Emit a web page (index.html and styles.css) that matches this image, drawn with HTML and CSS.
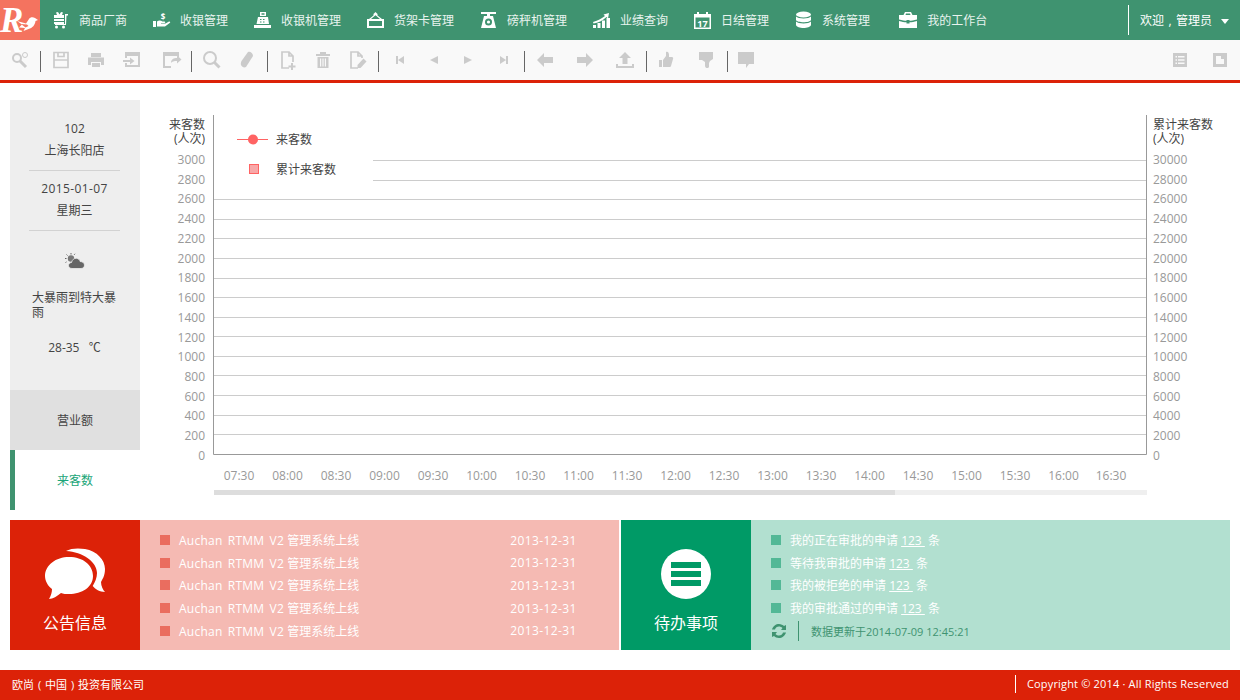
FILE: index.html
```html
<!DOCTYPE html>
<html lang="zh-CN">
<head>
<meta charset="utf-8">
<title>来客数</title>
<link rel="stylesheet" href="styles.css">
</head>
<body>
<header class="topbar">
  <a class="logo">
    <svg viewBox="0 0 40 40" width="40" height="40">
      <text class="logo-r" x="0" y="32">R</text>
      <path class="logo-w" d="M17 21l9 2.500 3-4.500c1-2 4-2.500 6-1l3 2-2.500 1c-.5 4-3 7-7 8l-5 2 1.500-3-6-.5 3-3z"/>
      <path class="logo-b" d="M21 24l6 .6 1.500 1.500-3 1.400z"/>
    </svg>
  </a>
  <nav class="nav">
    <a class="nav-item"><svg class="nav-icon" viewBox="0 0 17 18"><path d="M2 4h3L4 1.500 6 1l1.500 2.500L9 1l2 .5L10 4h2v3H2zM2 8h10v2H2zM2 11h10v2H2zM13 3h3v1.500h-1.500L14 14H3v-1h10z"/><circle cx="4.500" cy="16" r="1.500"/><circle cx="11.500" cy="16" r="1.500"/></svg><span>商品厂商</span></a>
    <a class="nav-item"><svg class="nav-icon" viewBox="0 0 17 18"><text class="dollar" x="10" y="8.500">$</text><path d="M0 10h3v6H0zM4 10.500c2-1.500 4-1 5.500 0h2c1 0 1 1.500 0 1.500H8v.6h4.500l3.500-2c1-.5 1.500.7 1 1.200l-5 3.700H4z"/></svg><span>收银管理</span></a>
    <a class="nav-item"><svg class="nav-icon" viewBox="0 0 17 18"><path d="M6 1h6v4H6zM4 6h10l1 7H2.500zM0 14h17v3H0z"/><path class="nav-cut" d="M7.500 2.200h3v1.600h-3zM6 8h1.500v1H6zM9 8h1.500v1H9zM6 10.500h1.500v1H6zM9 10.500h1.500v1H9z"/></svg><span>收银机管理</span></a>
    <a class="nav-item"><svg class="nav-icon" viewBox="0 0 17 18"><path d="M8.500 1l2 2v1.500L15 8h-2L8.500 4.300 4 8H2l4.500-3.500V3zM0 8h17v9H0z"/><path class="nav-cut" d="M2 10h13v5H2z"/></svg><span>货架卡管理</span></a>
    <a class="nav-item"><svg class="nav-icon" viewBox="0 0 17 18"><path d="M1 1h15v2H1zM7 3h3v2h3l3 12H1L4 5h3z"/><circle class="nav-cut" cx="8.500" cy="11" r="3.500"/><circle cx="8.500" cy="11" r="1.600"/></svg><span>磅秤机管理</span></a>
    <a class="nav-item"><svg class="nav-icon" viewBox="0 0 17 18"><path d="M0 14h3v3H0zM4.500 12h3v5h-3zM9 9.500h3V17H9zM13.500 7H17v10h-3.500z"/><path d="M0 11c4-1 8-3 12-6l-1.500-1.500L16 2l-1 5.500-1.500-1.500C9.500 9.500 5 12 .5 12.500z"/></svg><span>业绩查询</span></a>
    <a class="nav-item"><svg class="nav-icon" viewBox="0 0 17 18"><path d="M0 3h3V1h2v2h7V1h2v2h3v15H0zM1.500 6.500v10h14v-10z"/><text class="cal" x="8.500" y="15.500">17</text></svg><span>日结管理</span></a>
    <a class="nav-item"><svg class="nav-icon" viewBox="0 0 17 18"><ellipse cx="8.500" cy="3.500" rx="7.500" ry="3"/><path d="M1 5.500c2 2.500 13 2.500 15 0V9c-1 3-14 3-15 0zM1 10.500c2 2.500 13 2.500 15 0V14c-1 4-14 4-15 0z"/></svg><span>系统管理</span></a>
    <a class="nav-item nav-last"><svg class="nav-icon" viewBox="0 0 18 18"><path d="M6 1h6l1.500 3H18v4.500c-3 1-6 1.300-7.500 1.300V9h-3v.8C6 9.800 3 9.500 0 8.500V4h4.500zM6.500 4h5L11 2.500H7zM0 10c3 1 5 1.300 7.500 1.300v1.200h3v-1.200c2.500 0 4.500-.3 7.500-1.300v7H0z"/></svg><span>我的工作台</span></a>
  </nav>
  <div class="user"><span>欢迎<em class="punct">,</em>管理员</span><i class="caret"></i></div>
</header>

<div class="toolbar">
  <div class="tools">
    <svg class="tool" viewBox="0 0 20 20"><circle class="t-line" cx="7" cy="8" r="4"/><path class="t-line t-thick" d="M10 11l6 6"/><circle class="t-thin" cx="15" cy="5" r="2.500"/></svg>
  </div>
  <i class="sep"></i>
  <div class="tools tools-p9">
    <svg class="tool" viewBox="0 0 20 20"><path class="t-line t-thin2" d="M3 2.500h14v15H3zM3 10h14M7 2.500v4h6v-4"/></svg>
    <svg class="tool" viewBox="0 0 20 20"><path d="M5 3h10v4H5zM2 7.500h16V15h-3v-3H5v3H2zM6 13h8v4H6z"/></svg>
    <svg class="tool tool-m1" viewBox="0 0 20 20"><path d="M3 2h15v15H3v-4h2v2h11V6H5v2H3zM1 10h7V7.500l4.500 3.500L8 14.500V12H1z"/></svg>
    <svg class="tool tool-m5" viewBox="0 0 20 20"><path d="M1 2h16v5h-1V6H3v10h6v2H1zM9 13c0-4 3-5 6-5V5.500l4.500 4-4.500 4V11c-3 0-5 .6-6 2z"/></svg>
  </div>
  <i class="sep"></i>
  <div class="tools">
    <svg class="tool" viewBox="0 0 20 20"><circle class="t-line" cx="8" cy="8" r="6"/><path class="t-line t-thick" d="M12.500 12.500l5 5"/></svg>
    <svg class="tool" viewBox="0 0 20 20"><path d="M11 2c2-1 5 1 5 4L9 17c-2 1-4 0-5-2-.5-1 0-3 .5-4z"/></svg>
  </div>
  <i class="sep"></i>
  <div class="tools">
    <svg class="tool" viewBox="0 0 20 20"><path class="t-line t-thin2" d="M11 18H4V2h7l4 4v6M11 2v4h4"/><path d="M13 13h2v2.500h2.500v2H15V20h-2v-2.500h-2.500v-2H13z"/></svg>
    <svg class="tool" viewBox="0 0 20 20"><path d="M7 2h6v2h4v2H3V4h4zM4.500 7h11v11h-11zM7 8.500v8h1.200v-8zM9.400 8.500v8h1.200v-8zM11.800 8.500v8H13v-8z"/></svg>
    <svg class="tool" viewBox="0 0 20 20"><path class="t-line t-thin2" d="M10 18H3V2h7l4 4v2M10 2v4h4"/><path d="M15.500 8.500l3 3-6 6.500h-3v-3z"/></svg>
  </div>
  <i class="sep"></i>
  <div class="tools tools-nav">
    <svg class="tool" viewBox="0 0 20 20"><path d="M6 6h2v8H6zM14 6v8l-6-4z"/></svg>
    <svg class="tool" viewBox="0 0 20 20"><path d="M14 6v8L6 10z"/></svg>
    <svg class="tool" viewBox="0 0 20 20"><path d="M6 6v8l8-4z"/></svg>
    <svg class="tool tool-m2" viewBox="0 0 20 20"><path d="M12 6h2v8h-2zM6 6v8l6-4z"/></svg>
  </div>
  <i class="sep"></i>
  <div class="tools tools-wide">
    <svg class="tool" viewBox="0 0 20 20"><path d="M2 10l7-7v4h9v6H9v4z"/></svg>
    <svg class="tool" viewBox="0 0 20 20"><path d="M18 10l-7-7v4H2v6h9v4z"/></svg>
    <svg class="tool" viewBox="0 0 20 20"><path d="M10 2l6 6h-3.500v6h-5V8H4zM1 14h2v2h14v-2h2v4H1z"/></svg>
  </div>
  <i class="sep"></i>
  <div class="tools tools-wide tools-p10">
    <svg class="tool" viewBox="0 0 20 20"><path d="M2 10h3v7H2zM6 10l3-4V2c2-1 3 1 3 3v2h3c1 0 1.500 1 1 2l-2 7c-.3 1-1 1-2 1H6z"/></svg>
    <svg class="tool" viewBox="0 0 20 20"><path d="M2 2h14v7l-3 2-1 2v4c-1 2-4 1-4-1v-4L5 10H2z"/></svg>
  </div>
  <i class="sep"></i>
  <div class="tools tools-last">
    <svg class="tool" viewBox="0 0 20 20"><path d="M2 2h16v12h-5l-3 4v-4H2z"/></svg>
  </div>
  <div class="tools tools-right">
    <svg class="tool" viewBox="0 0 20 20"><path d="M3 3h14v14H3zM5.500 6v1.500h1.500V6zM8 6v1.500h6.500V6zM5.500 9.300v1.500h1.500V9.300zM8 9.300v1.500h6.500V9.300zM5.500 12.500V14h1.500v-1.500zM8 12.500V14h6.500v-1.500z" fill-rule="evenodd"/></svg>
    <svg class="tool" viewBox="0 0 20 20"><path d="M3 3h14v14H3zM6 6v8h8V9h-3V6z" fill-rule="evenodd"/></svg>
  </div>
</div>

<main class="main">
  <aside class="side">
    <div class="side-info">
      <div class="info-block">
        <p>102</p>
        <p>上海长阳店</p>
      </div>
      <div class="info-block">
        <p class="date">2015-01-07</p>
        <p>星期三</p>
      </div>
      <svg class="weather" viewBox="0 0 20 16" width="20" height="16">
        <path class="sun" d="M6 0v1.500M1.500 1.500l1 1M0 5.500h1.500M0.500 9.500l1-.6M10 .8l-.8 1"/>
        <circle class="sun-f" cx="6" cy="5.500" r="3.200"/>
        <path class="cloud" d="M7 15.500c-2 0-3.500-1.300-3.500-3 0-1.600 1.300-2.900 3-3C7 7 9 5 11.500 5.300c2 .2 3.400 1.700 3.600 3.200 2.600 0 4.400 1.700 4.400 3.600 0 1.900-1.500 3.400-3.500 3.400z"/>
      </svg>
      <p class="w-desc">大暴雨到特大暴雨</p>
      <p class="w-temp">28-35 &nbsp;&nbsp;℃</p>
    </div>
    <div class="tab">营业额</div>
    <div class="tab tab-on">来客数</div>
  </aside>

  <section class="chart">
    <svg class="chart-svg" viewBox="150 100 1090 410" width="1090" height="410">
      <g class="grid">
        <path d="M373 160.500H1146M373 180.500H1146M214 199.500H1146M214 219.500H1146M214 238.500H1146M214 258.500H1146M214 278.500H1146M214 297.500H1146M214 317.500H1146M214 336.500H1146M214 356.500H1146M214 375.500H1146M214 395.500H1146M214 415.500H1146M214 434.500H1146"/>
      </g>
      <path class="axis" d="M213.500 115V454.500H1146.500V115"/>
      <g class="y-l">
        <text x="205" y="164">3000</text><text x="205" y="184">2800</text><text x="205" y="203">2600</text><text x="205" y="223">2400</text><text x="205" y="243">2200</text><text x="205" y="263">2000</text><text x="205" y="282">1800</text><text x="205" y="302">1600</text><text x="205" y="322">1400</text><text x="205" y="342">1200</text><text x="205" y="361">1000</text><text x="205" y="381">800</text><text x="205" y="401">600</text><text x="205" y="420">400</text><text x="205" y="440">200</text><text x="205" y="460">0</text>
      </g>
      <g class="y-r">
        <text x="1153" y="164">30000</text><text x="1153" y="184">28000</text><text x="1153" y="203">26000</text><text x="1153" y="223">24000</text><text x="1153" y="243">22000</text><text x="1153" y="263">20000</text><text x="1153" y="282">18000</text><text x="1153" y="302">16000</text><text x="1153" y="322">14000</text><text x="1153" y="342">12000</text><text x="1153" y="361">10000</text><text x="1153" y="381">8000</text><text x="1153" y="401">6000</text><text x="1153" y="420">4000</text><text x="1153" y="440">2000</text><text x="1153" y="460">0</text>
      </g>
      <g class="x-l">
        <text x="239" y="480">07:30</text><text x="287.500" y="480">08:00</text><text x="336" y="480">08:30</text><text x="384.500" y="480">09:00</text><text x="433" y="480">09:30</text><text x="481.500" y="480">10:00</text><text x="530" y="480">10:30</text><text x="578.500" y="480">11:00</text><text x="627" y="480">11:30</text><text x="675.500" y="480">12:00</text><text x="724" y="480">12:30</text><text x="772.500" y="480">13:00</text><text x="821" y="480">13:30</text><text x="869.500" y="480">14:00</text><text x="918" y="480">14:30</text><text x="966.500" y="480">15:00</text><text x="1015" y="480">15:30</text><text x="1063.500" y="480">16:00</text><text x="1111" y="480">16:30</text>
      </g>
      <g class="c-title">
        <text class="end" x="205" y="129">来客数</text>
        <text class="end" x="205" y="143">(人次)</text>
        <text x="1153" y="129">累计来客数</text>
        <text x="1153" y="143">(人次)</text>
        <text x="276" y="144">来客数</text>
        <text x="276" y="174">累计来客数</text>
      </g>
      <path class="leg-line" d="M237 139.500h31"/>
      <circle class="leg-dot" cx="253" cy="139.500" r="5"/>
      <rect class="leg-box" x="249.500" y="164.500" width="9" height="9"/>
      <rect class="sb" x="214" y="490" width="933" height="5"/>
      <rect class="sb-thumb" x="214" y="490" width="681" height="5"/>
    </svg>
  </section>
</main>

<section class="panels">
  <div class="panel panel-red">
    <div class="panel-head head-red">
      <svg class="head-icon" viewBox="0 0 60 52" width="60" height="52">
        <path d="M21 3C26 0 34 0 40 1 52 3 60 12 60 21c0 7-3 11-4 13 0 4 2 8 4 10-5 0-10-3-12.300-6C50 34 52 30 52 25 52 14 38 4 21 3z"/>
        <path d="M24 9c14 0 24 8 24 19S37 46 24 46c-3 0-6 0-8-1-4 3-8 6-12 6 2-3 3-7 3-10C3 38 0 33 0 28 0 17 11 9 24 9z"/>
      </svg>
      <div class="head-title">公告信息</div>
    </div>
    <ul class="list list-red">
      <li><i></i><span class="li-text"><span class="latin">Auchan RTMM V2</span> 管理系统上线</span><span class="li-date">2013-12-31</span></li>
      <li><i></i><span class="li-text"><span class="latin">Auchan RTMM V2</span> 管理系统上线</span><span class="li-date">2013-12-31</span></li>
      <li><i></i><span class="li-text"><span class="latin">Auchan RTMM V2</span> 管理系统上线</span><span class="li-date">2013-12-31</span></li>
      <li><i></i><span class="li-text"><span class="latin">Auchan RTMM V2</span> 管理系统上线</span><span class="li-date">2013-12-31</span></li>
      <li><i></i><span class="li-text"><span class="latin">Auchan RTMM V2</span> 管理系统上线</span><span class="li-date">2013-12-31</span></li>
    </ul>
  </div>
  <div class="panel panel-green">
    <div class="panel-head head-green">
      <div class="burger"><i></i><i></i><i></i></div>
      <div class="head-title">待办事项</div>
    </div>
    <ul class="list list-green">
      <li><i></i><span class="li-text">我的正在审批的申请 <u>123 </u> 条</span></li>
      <li><i></i><span class="li-text">等待我审批的申请 <u>123 </u> 条</span></li>
      <li><i></i><span class="li-text">我的被拒绝的申请 <u>123 </u> 条</span></li>
      <li><i></i><span class="li-text">我的审批通过的申请 <u>123 </u> 条</span></li>
      <li class="li-update">
        <svg class="refresh" viewBox="0 0 16 16" width="16" height="16"><path d="M1 6.500C2 3 5 1 8 1c2 0 4 1 5 2l2-1v5h-5l1.500-2C10.500 4 9 3.500 8 3.500c-2 0-3.500 1.300-4 3zM15 9.500C14 13 11 15 8 15c-2 0-4-1-5-2l-2 1V9h5l-1.500 2c1 1 2.500 1.500 3.500 1.500 2 0 3.500-1.300 4-3z"/></svg>
        <b class="upd-sep"></b>
        <span class="upd-text">数据更新于2014-07-09 12:45:21</span>
      </li>
    </ul>
  </div>
</section>

<footer class="footer">
  <span>欧尚<em class="punct">(</em>中国<em class="punct">)</em>投资有限公司</span>
  <span class="copy">Copyright © 2014 · All Rights Reserved</span>
</footer>
</body>
</html>
```

FILE: styles.css
```css
* { box-sizing: border-box; }
html, body { margin: 0; padding: 0; }
body {
  width: 1240px;
  height: 700px;
  overflow: hidden;
  background: #fff;
  font-family: "Open Sans", "Noto Sans CJK SC", sans-serif;
  font-size: 12px;
  color: #444;
}
p { margin: 0; }
.punct { display: inline-block; width: 1em; font-style: normal; text-align: center; }

.topbar {
  display: flex;
  align-items: center;
  height: 40px;
  background: #3f9370;
  color: #fff;
}
.logo { display: block; width: 40px; height: 40px; background: #f4735f; overflow: hidden; }
.logo svg { display: block; }
.logo-r { font: italic 700 35px "Liberation Serif", serif; fill: #fff; }
.logo-w { fill: #fff; }
.logo-b { fill: #f4735f; }

.nav { display: flex; gap: 26px; padding-left: 12px; }
.nav-item { display: flex; align-items: center; gap: 10px; height: 40px; color: #e9f3ef; line-height: 20px; }
.nav-item span { padding-top: 2px; }
.nav-icon { display: block; width: 17px; height: 18px; fill: #fff; overflow: visible; }
.nav-cut { fill: #3f9370; }
.nav-last { margin-left: 3px; }
.nav-last .nav-icon { width: 18px; }
.dollar { font: 700 8px "Open Sans", sans-serif; text-anchor: middle; fill: #fff; }
.cal { font: 700 9px "Open Sans", sans-serif; text-anchor: middle; fill: #fff; }

.user {
  display: flex;
  align-items: center;
  height: 30px;
  margin-left: auto;
  width: 112px;
  padding: 2px 0 0 11px;
  border-left: 1px solid #fff;
  line-height: 20px;
}
.caret {
  width: 0;
  height: 0;
  margin-left: 9px;
  border-left: 4px solid transparent;
  border-right: 4px solid transparent;
  border-top: 5px solid #fff;
}

.toolbar {
  display: flex;
  align-items: center;
  height: 43px;
  background: #f9f9f9;
  border-bottom: 3px solid #dc2208;
}
.tools { display: flex; gap: 15px; align-items: center; padding: 0 10px; }
.tools-p9 { padding-right: 9px; }
.tools-nav { gap: 14px; padding-left: 11px; }
.tools-wide { gap: 20px; padding: 0 11px 0 10px; }
.tools-p10 { padding-right: 10px; }
.tools-last { padding-left: 8px; }
.tools-right { gap: 20px; margin-left: auto; }
.tool { display: block; width: 20px; height: 20px; fill: #cbcbcb; }
.tool-m1 { margin-left: 1px; }
.tool-m5 { margin-left: 5px; }
.tool-m2 { margin-left: 2px; }
.t-line { fill: none; stroke: #cbcbcb; stroke-width: 2; }
.t-thick { stroke-width: 3; }
.t-thin { fill: none; stroke: #cbcbcb; stroke-width: 1; }
.t-thin2 { stroke-width: 1.700; }
.sep { display: block; flex: none; width: 1px; height: 21px; margin-top: 2px; background: #666; }

.main { display: flex; height: 410px; margin-top: 17px; padding-left: 10px; }
.side { display: flex; flex-direction: column; flex: none; width: 130px; }
.side-info {
  display: flex;
  flex-direction: column;
  height: 290px;
  padding: 18px 20px 0 19px;
  background: #eee;
}
.info-block {
  text-align: center;
  line-height: 22px;
  color: #444;
}
.info-block:first-child { height: 52px; }
.info-block + .info-block { height: 61px; padding-top: 7px; border-top: 1px solid #d2d2d2; border-bottom: 1px solid #d2d2d2; }
.date { letter-spacing: .4px; }
.weather { display: block; align-self: center; margin-top: 22px; margin-left: 1px; }
.sun { fill: none; stroke: #666; stroke-width: 1; }
.sun-f { fill: #777; }
.cloud { fill: #666; stroke: #eee; stroke-width: .8; }
.w-desc { margin: 21px -4px 0 3px; line-height: 15px; }
.w-temp { margin-top: 18px; text-align: center; line-height: 20px; }
.tab {
  display: flex;
  align-items: center;
  justify-content: center;
  height: 60px;
  background: #e0e0e0;
  color: #444;
}
.tab-on { background: #fff; color: #1aa578; border-left: 5px solid #3f9370; padding-right: 5px; }

.chart { flex: none; width: 1090px; margin-left: 10px; }
.chart-svg { display: block; font-size: 12px; }
.grid path { fill: none; stroke: #ccc; stroke-width: 1; }
.axis { fill: none; stroke: #999; stroke-width: 1; }
.y-l text { fill: #999; text-anchor: end; }
.y-r text { fill: #999; }
.x-l text { fill: #999; text-anchor: middle; }
.c-title text { fill: #444; }
.c-title .end { text-anchor: end; }
.leg-line { fill: none; stroke: #ff6363; stroke-width: 1; }
.leg-dot { fill: #ff6363; }
.leg-box { fill: #f8a8a8; stroke: #ff6363; stroke-width: 1; }
.sb { fill: #efefef; }
.sb-thumb { fill: #ddd; }

.panels { display: flex; gap: 2px; height: 130px; margin: 10px 10px 0; }
.panel { display: flex; flex: 1; }
.panel-red { background: #f5bab3; }
.panel-green { background: #b2e0d0; }
.panel-head {
  display: flex;
  flex-direction: column;
  align-items: center;
  flex: none;
  width: 130px;
  height: 130px;
  color: #fff;
}
.head-red { background: #dc2208; padding-top: 28px; }
.head-green { background: #009a66; padding-top: 29px; }
.head-icon { display: block; fill: #fff; }
.head-title { margin-top: 11px; font-size: 16px; line-height: 24px; }
.burger {
  display: flex;
  flex-direction: column;
  justify-content: center;
  gap: 3px;
  width: 50px;
  height: 50px;
  padding: 0 10px;
  background: #fff;
  border-radius: 50%;
}
.burger i { display: block; height: 6px; background: #009a66; }
.head-green .head-title { margin-top: 12px; }

.list { flex: 1; margin: 0; padding: 9px 0 0 20px; list-style: none; color: #fff; }
.list li { display: flex; align-items: center; height: 22.600px; }
.list li > i { display: block; flex: none; width: 10px; height: 10px; margin-right: 9px; }
.list-red li > i { background: #ea6d5f; }
.list-green li > i { background: #53b896; }
.li-text { white-space: pre; }
.latin { letter-spacing: .25px; word-spacing: 1.800px; }
.li-date { margin-left: 151px; letter-spacing: .4px; }
.li-update { color: #3f9370; }
.refresh { display: block; fill: #3f9370; flex: none; }
.upd-sep { display: block; flex: none; width: 1px; height: 20px; margin: 0 12px 0 11px; background: #3f9370; }
.upd-text { font-size: 11px; }

.footer {
  display: flex;
  align-items: center;
  height: 30px;
  margin-top: 20px;
  padding: 0 11px 2px 12px;
  background: #dc2208;
  color: #fff;
  font-size: 11px;
}
.copy {
  display: block;
  margin-left: auto;
  padding-left: 11px;
  border-left: 1px solid #fff;
  letter-spacing: .18px;
  line-height: 18px;
}
```
